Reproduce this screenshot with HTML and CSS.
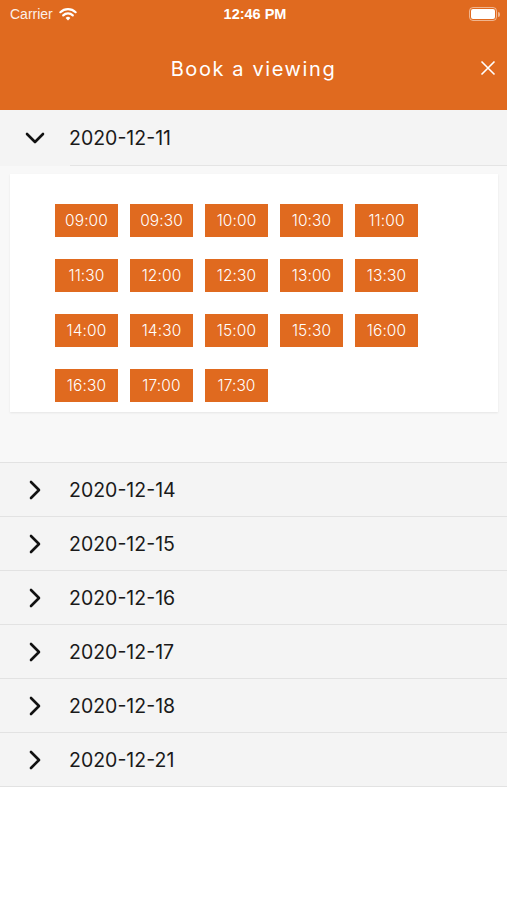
FILE: index.html
```html
<!DOCTYPE html>
<html lang="en">
<head>
    <meta charset="UTF-8">
    <title>Book a viewing</title>
    <link rel="stylesheet" href="styles.css">
</head>
<body>
    <div class="header">
        <div class="status-bar">
            <div class="status-left">
                <span>Carrier</span>
                <svg class="wifi" width="18" height="14" viewBox="0 0 18 14">
                    <path d="M9 13.5 L6.6 10.9 A3.4 3.4 0 0 1 11.4 10.9 Z" fill="#fff"/>
                    <path d="M4.2 8.4 A6.9 6.9 0 0 1 13.8 8.4" stroke="#fff" stroke-width="2.2" fill="none" stroke-linecap="round"/>
                    <path d="M1.4 5.2 A11 11 0 0 1 16.6 5.2" stroke="#fff" stroke-width="2.2" fill="none" stroke-linecap="round"/>
                </svg>
            </div>
            <div class="status-time">12:46 PM</div>
            <div class="status-right">
                <div class="battery"><div class="battery-level"></div></div>
                <div class="battery-cap"></div>
            </div>
        </div>
        <div class="nav-bar">
            <div class="nav-title">Book a viewing</div>
            <svg class="close" width="16" height="16" viewBox="0 0 16 16">
                <path d="M1.5 1.5 L14.5 14.5 M14.5 1.5 L1.5 14.5" stroke="#fff" stroke-width="1.6" fill="none"/>
            </svg>
        </div>
    </div>

    <div class="day day-open">
        <div class="day-head">
            <svg class="chevron" width="22" height="22" viewBox="0 0 22 22">
                <path d="M3 7 L11 15 L19 7" stroke="#111" stroke-width="2.6" fill="none" stroke-linecap="round" stroke-linejoin="round"/>
            </svg>
            <span class="day-date">2020-12-11</span>
        </div>
        <div class="day-sep"></div>
        <div class="day-body">
            <div class="slots">
                <div class="slot">09:00</div>
                <div class="slot">09:30</div>
                <div class="slot">10:00</div>
                <div class="slot">10:30</div>
                <div class="slot">11:00</div>
                <div class="slot">11:30</div>
                <div class="slot">12:00</div>
                <div class="slot">12:30</div>
                <div class="slot">13:00</div>
                <div class="slot">13:30</div>
                <div class="slot">14:00</div>
                <div class="slot">14:30</div>
                <div class="slot">15:00</div>
                <div class="slot">15:30</div>
                <div class="slot">16:00</div>
                <div class="slot">16:30</div>
                <div class="slot">17:00</div>
                <div class="slot">17:30</div>
            </div>
        </div>
    </div>

    <div class="day">
        <div class="day-head">
            <svg class="chevron" width="22" height="22" viewBox="0 0 22 22">
                <path d="M7 3 L15 11 L7 19" stroke="#111" stroke-width="2.6" fill="none" stroke-linecap="round" stroke-linejoin="round"/>
            </svg>
            <span class="day-date">2020-12-14</span>
        </div>
    </div>
    <div class="day">
        <div class="day-head">
            <svg class="chevron" width="22" height="22" viewBox="0 0 22 22">
                <path d="M7 3 L15 11 L7 19" stroke="#111" stroke-width="2.6" fill="none" stroke-linecap="round" stroke-linejoin="round"/>
            </svg>
            <span class="day-date">2020-12-15</span>
        </div>
    </div>
    <div class="day">
        <div class="day-head">
            <svg class="chevron" width="22" height="22" viewBox="0 0 22 22">
                <path d="M7 3 L15 11 L7 19" stroke="#111" stroke-width="2.6" fill="none" stroke-linecap="round" stroke-linejoin="round"/>
            </svg>
            <span class="day-date">2020-12-16</span>
        </div>
    </div>
    <div class="day">
        <div class="day-head">
            <svg class="chevron" width="22" height="22" viewBox="0 0 22 22">
                <path d="M7 3 L15 11 L7 19" stroke="#111" stroke-width="2.6" fill="none" stroke-linecap="round" stroke-linejoin="round"/>
            </svg>
            <span class="day-date">2020-12-17</span>
        </div>
    </div>
    <div class="day">
        <div class="day-head">
            <svg class="chevron" width="22" height="22" viewBox="0 0 22 22">
                <path d="M7 3 L15 11 L7 19" stroke="#111" stroke-width="2.6" fill="none" stroke-linecap="round" stroke-linejoin="round"/>
            </svg>
            <span class="day-date">2020-12-18</span>
        </div>
    </div>
    <div class="day">
        <div class="day-head">
            <svg class="chevron" width="22" height="22" viewBox="0 0 22 22">
                <path d="M7 3 L15 11 L7 19" stroke="#111" stroke-width="2.6" fill="none" stroke-linecap="round" stroke-linejoin="round"/>
            </svg>
            <span class="day-date">2020-12-21</span>
        </div>
    </div>
</body>
</html>
```

FILE: styles.css
```css
body {
    margin: 0;
    background: #fff;
    font-family: "Inter", "Noto Sans", sans-serif;
}
.header {
    background: #e06a1f;
    color: #fff;
    height: 110px;
}
.status-bar {
    height: 28px;
    display: flex;
    align-items: center;
    justify-content: space-between;
    padding: 0 7px 0 10px;
    font-family: "Liberation Sans", sans-serif;
    font-size: 14px;
}
.status-left {
    display: flex;
    align-items: center;
    gap: 6px;
    width: 120px;
}
.status-left>span {
    opacity: 0.9;
}
.status-time {
    font-weight: bold;
    font-size: 14.5px;
}
.status-right {
    width: 120px;
    display: flex;
    justify-content: flex-end;
    align-items: center;
}
.battery {
    width: 24px;
    height: 10px;
    border: 1.5px solid rgba(255, 255, 255, 0.5);
    border-radius: 4px;
    padding: 1px;
}
.battery-level {
    height: 100%;
    background: #fff;
    border-radius: 2px;
}
.battery-cap {
    width: 2px;
    height: 5px;
    background: rgba(255, 255, 255, 0.5);
    border-radius: 0 2px 2px 0;
    margin-left: 1px;
}
.nav-bar {
    height: 82px;
    display: flex;
    align-items: center;
    justify-content: center;
    position: relative;
}
.nav-title {
    font-size: 20px;
    letter-spacing: 1.6px;
    margin-top: -1px;
}
.nav-bar>.close {
    position: absolute;
    right: 11px;
    top: 32px;
}
.day {
    background: #f4f4f4;
    border-bottom: 1px solid #e2e2e2;
}
.day-head {
    height: 53px;
    display: flex;
    align-items: center;
}
.day-open>.day-head {
    height: 55px;
}
.chevron {
    margin-left: 24px;
    margin-right: 23px;
}
.day-date {
    font-size: 19.5px;
    color: #1a1a1a;
}
.day-sep {
    height: 1px;
    margin-left: 70px;
    background: #e4e4e4;
}
.day-open>.day-body {
    background: #f8f8f8;
    padding: 8px 9px 50px 10px;
}
.slots {
    background: #fff;
    box-shadow: 0 1px 2px rgba(0, 0, 0, 0.08);
    padding: 30px 0 10px 45px;
    display: grid;
    grid-template-columns: repeat(5, 63px);
    column-gap: 12px;
    row-gap: 22px;
}
.slot {
    background: #e06a1f;
    color: #fff;
    height: 33px;
    line-height: 33px;
    text-align: center;
    font-size: 15.5px;
    font-weight: 300;
    letter-spacing: 0.1px;
}
```
